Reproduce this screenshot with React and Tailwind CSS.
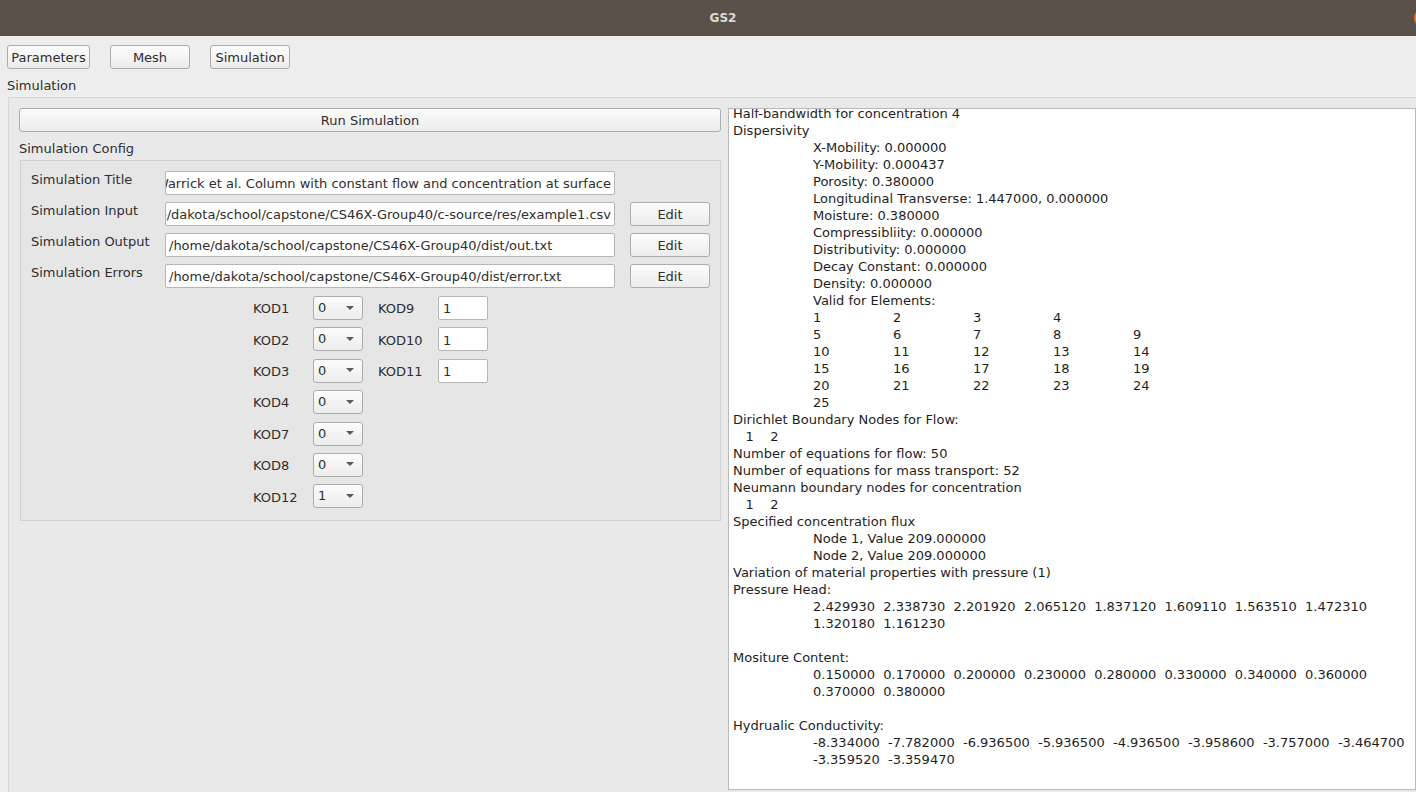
import { useState } from 'react'

const LOG = [
  'Half-bandwidth for concentration 4',
  'Dispersivity',
  '\tX-Mobility: 0.000000',
  '\tY-Mobility: 0.000437',
  '\tPorosity: 0.380000',
  '\tLongitudinal Transverse: 1.447000, 0.000000',
  '\tMoisture: 0.380000',
  '\tCompressibliity: 0.000000',
  '\tDistributivity: 0.000000',
  '\tDecay Constant: 0.000000',
  '\tDensity: 0.000000',
  '\tValid for Elements:',
  '\t1\t2\t3\t4',
  '\t5\t6\t7\t8\t9',
  '\t10\t11\t12\t13\t14',
  '\t15\t16\t17\t18\t19',
  '\t20\t21\t22\t23\t24',
  '\t25',
  'Dirichlet Boundary Nodes for Flow:',
  '   1    2',
  'Number of equations for flow: 50',
  'Number of equations for mass transport: 52',
  'Neumann boundary nodes for concentration',
  '   1    2',
  'Specified concentration flux',
  '\tNode 1, Value 209.000000',
  '\tNode 2, Value 209.000000',
  'Variation of material properties with pressure (1)',
  'Pressure Head:',
  '\t2.429930  2.338730  2.201920  2.065120  1.837120  1.609110  1.563510  1.472310',
  '\t1.320180  1.161230',
  '',
  'Mositure Content:',
  '\t0.150000  0.170000  0.200000  0.230000  0.280000  0.330000  0.340000  0.360000',
  '\t0.370000  0.380000',
  '',
  'Hydrualic Conductivity:',
  '\t-8.334000  -7.782000  -6.936500  -5.936500  -4.936500  -3.958600  -3.757000  -3.464700',
  '\t-3.359520  -3.359470',
]

const FILES = [
  { label: 'Simulation Title', value: 'Warrick et al. Column with constant flow and concentration at surface', end: true },
  { label: 'Simulation Input', value: '/home/dakota/school/capstone/CS46X-Group40/c-source/res/example1.csv', end: true, edit: true },
  { label: 'Simulation Output', value: '/home/dakota/school/capstone/CS46X-Group40/dist/out.txt', edit: true },
  { label: 'Simulation Errors', value: '/home/dakota/school/capstone/CS46X-Group40/dist/error.txt', edit: true },
]

const KODS = [
  ['KOD1', '0', 'KOD9', '1'],
  ['KOD2', '0', 'KOD10', '1'],
  ['KOD3', '0', 'KOD11', '1'],
  ['KOD4', '0'],
  ['KOD7', '0'],
  ['KOD8', '0'],
  ['KOD12', '1'],
]

function Button({ children, className = '' }) {
  return (
    <div
      className={`h-6 pt-[2px] flex items-center justify-center rounded-[3px] border border-[#acacac] bg-gradient-to-b from-[#fcfcfc] to-[#ececec] text-[#2e2e2e] ${className}`}
    >
      {children}
    </div>
  )
}

function Field({ value, end }) {
  return (
    <div
      className={`w-[450px] h-6 pt-[2px] flex items-center overflow-hidden whitespace-nowrap rounded-[2px] border border-[#b6b6b6] bg-white px-[3px] text-[#2e2e2e] ${end ? 'justify-end' : 'justify-start'}`}
    >
      <span className="shrink-0">{value}</span>
    </div>
  )
}

function Combo({ value }) {
  return (
    <div className="w-[50px] h-6 flex items-center justify-between rounded-[3px] border border-[#acacac] bg-gradient-to-b from-[#fcfcfc] to-[#ececec] pl-[4px] pr-[8px] text-[#2e2e2e]">
      <span className="leading-none -mt-[1px]">{value}</span>
      <svg width="8" height="5" viewBox="0 0 8 5">
        <path d="M0 0 L8 0 L4 4 Z" fill="#5a5a5a" />
      </svg>
    </div>
  )
}

export default function App() {
  const [tab] = useState('Simulation')

  return (
    <div className="w-[1416px] h-[792px] overflow-hidden bg-[#ededed] flex flex-col text-[13px] font-['DejaVu_Sans',sans-serif] text-[#2e2e2e]">
      <div className="relative h-9 shrink-0 bg-[#5a514a] flex items-center justify-center pl-[30px]">
        <span className="font-bold text-[12px] text-[#dfdbd2]">GS2</span>
        <div className="absolute right-[-16px] top-[9px] w-[18px] h-[18px] rounded-full bg-[#e9772b]" />
      </div>

      <div className="flex-1 flex flex-col pl-[7px]">
        <div className="mt-[9px] flex gap-[20px]">
          <Button className="w-[83px]">Parameters</Button>
          <Button className="w-[80px]">Mesh</Button>
          <Button className="w-[80px]">Simulation</Button>
        </div>
        <div className="mt-[8px] leading-[17px]">{tab}</div>

        <div className="mt-[3px] ml-px mr-[-20px] flex-1 border-l border-t border-[#d6d6d6] bg-[#e9e9e9] pl-[10px] pt-[10px] flex gap-[7px]">
          <div className="w-[702px] flex flex-col">
            <Button className="w-full">Run Simulation</Button>
            <div className="mt-[8px] leading-[17px]">Simulation Config</div>
            <div className="mt-[3px] ml-px h-[361px] border border-[#d0d0d0] bg-[#e6e6e6] pl-[10px] pt-[10px] flex flex-col">
              <div className="flex flex-col gap-[7px]">
                {FILES.map((f) => (
                  <div key={f.label} className="flex items-start">
                    <div className="w-[134px] leading-[17px]">{f.label}</div>
                    <Field value={f.value} end={f.end} />
                    {f.edit && <Button className="ml-[15px] w-[80px]">Edit</Button>}
                  </div>
                ))}
              </div>
              <div className="mt-[8px] ml-[222px] flex flex-col gap-y-[7.4px]">
                {KODS.map(([a, av, b, bv]) => (
                  <div key={a} className="flex items-center">
                    <div className="w-[60px] pt-[2px]">{a}</div>
                    <Combo value={av} />
                    {b && (
                      <>
                        <div className="ml-[15px] w-[60px] pt-[2px]">{b}</div>
                        <div className="w-[50px] h-6 pt-[2px] flex items-center rounded-[2px] border border-[#b6b6b6] bg-white px-[4px]">
                          {bv}
                        </div>
                      </>
                    )}
                  </div>
                ))}
              </div>
            </div>
          </div>

          <div className="w-[688px] h-[682px] border border-[#b9b9b9] bg-white overflow-hidden pl-[4px]">
            <div className="-mt-[4px] whitespace-pre leading-[17px] [tab-size:80px] text-[#1e1e1e]">
              {LOG.map((line, i) => (
                <div key={i} className="h-[17px]">{line}</div>
              ))}
            </div>
          </div>
        </div>
      </div>
    </div>
  )
}
